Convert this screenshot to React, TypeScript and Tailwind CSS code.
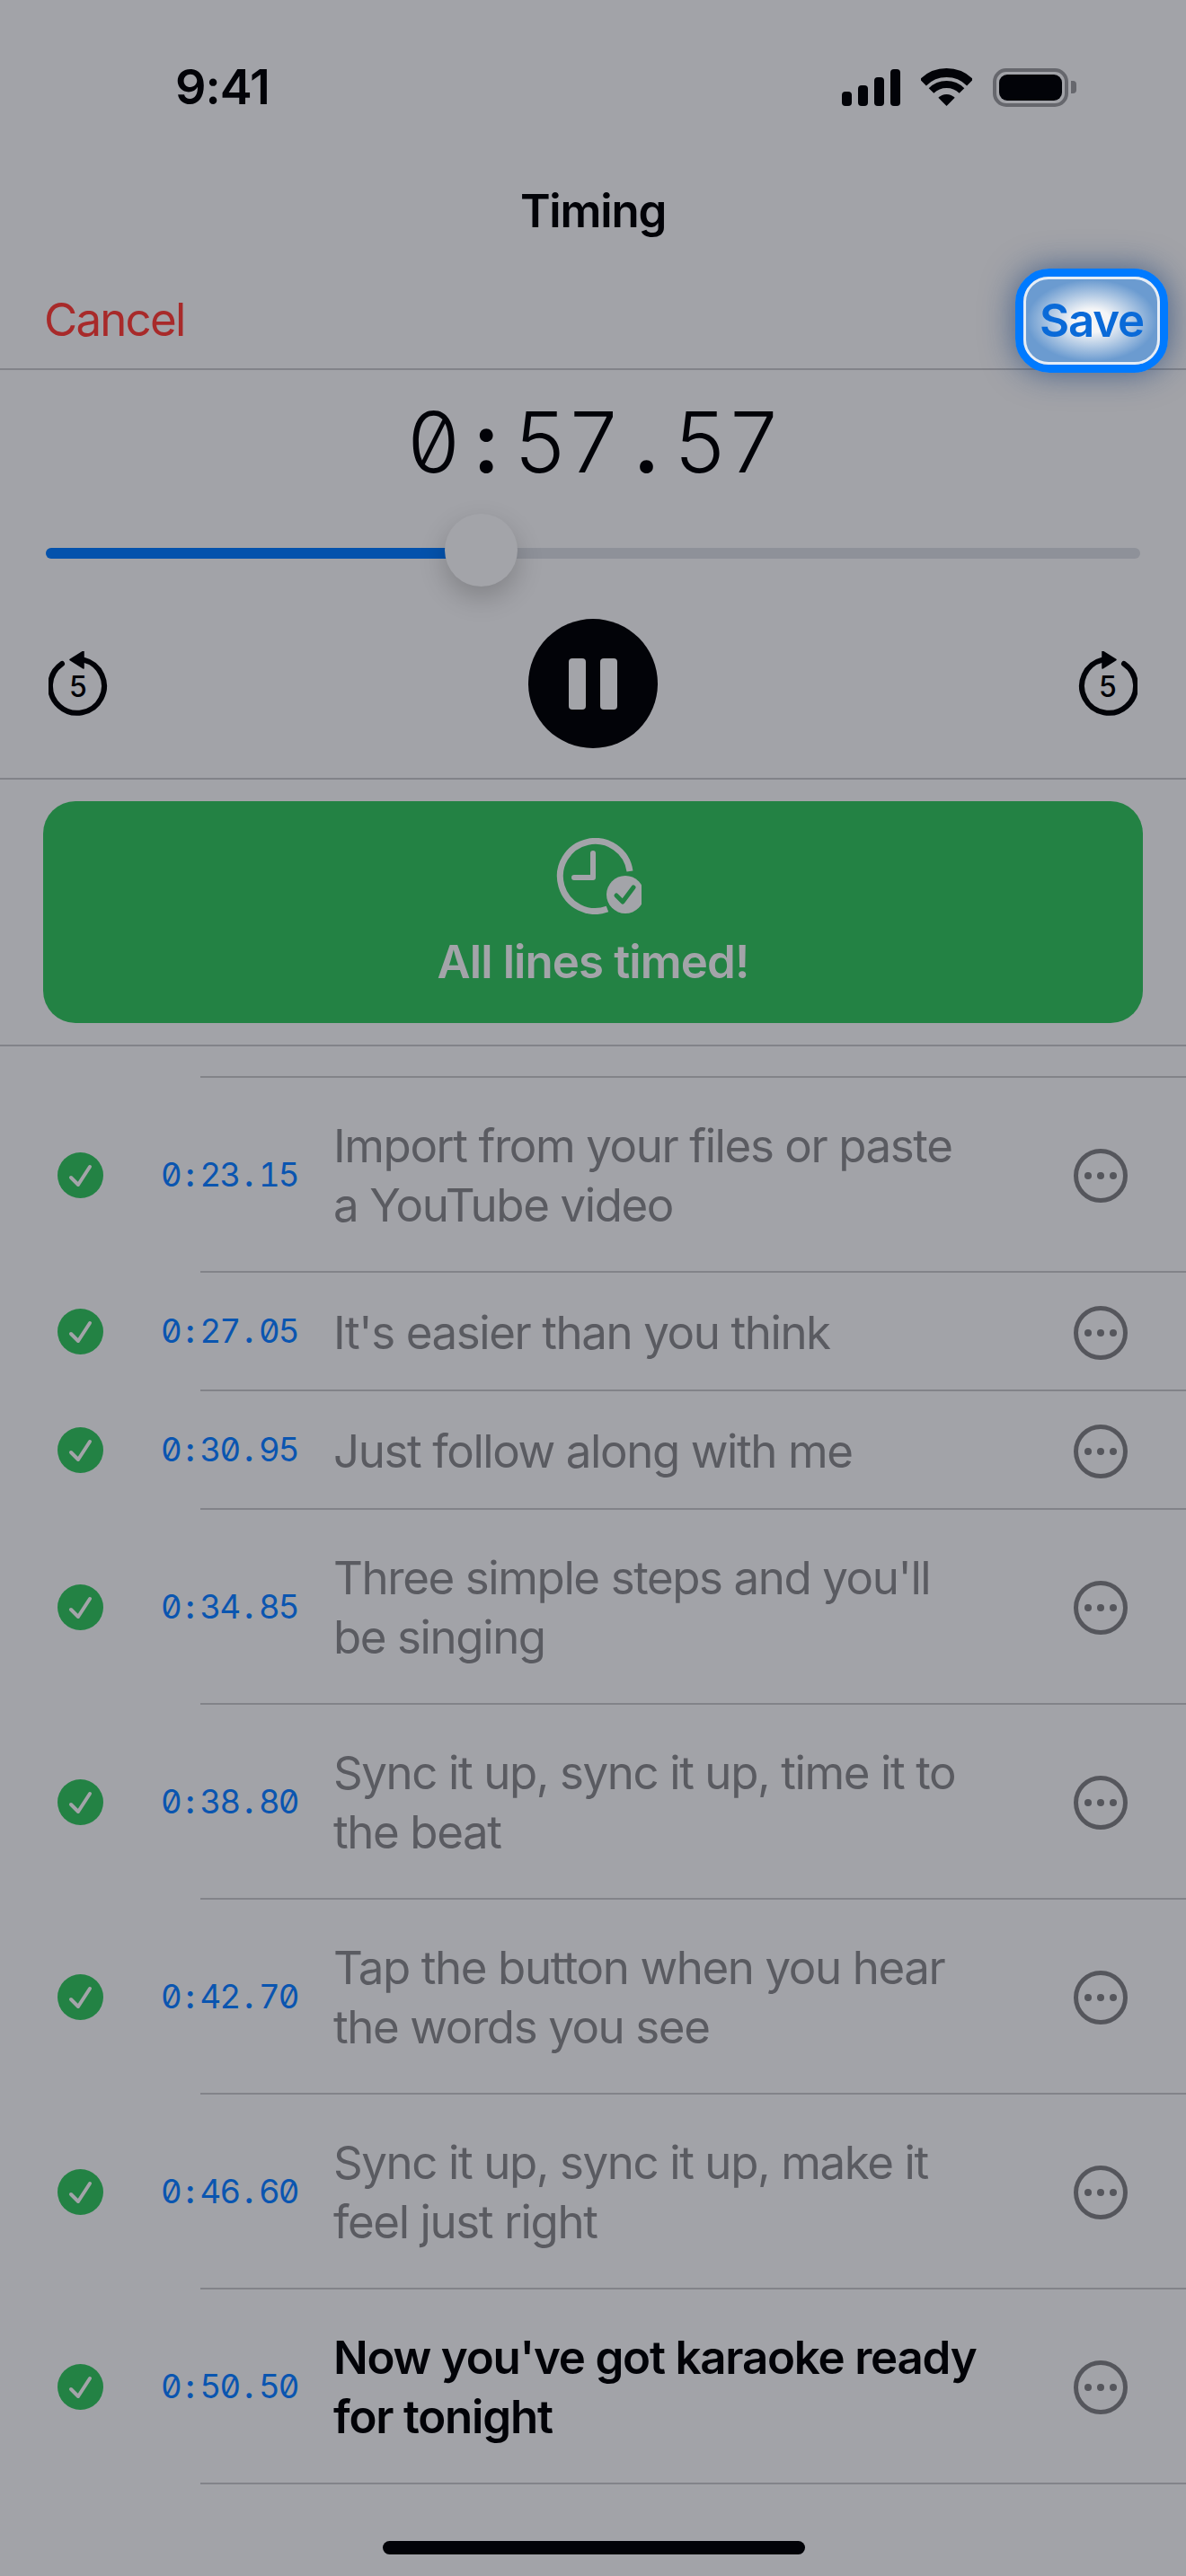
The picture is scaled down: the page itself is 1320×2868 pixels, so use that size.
const lines = [
  { time: '0:23.15', text: ['Import from your files or paste', 'a YouTube video'] },
  { time: '0:27.05', text: ["It's easier than you think"] },
  { time: '0:30.95', text: ['Just follow along with me'] },
  { time: '0:34.85', text: ["Three simple steps and you'll", 'be singing'] },
  { time: '0:38.80', text: ['Sync it up, sync it up, time it to', 'the beat'] },
  { time: '0:42.70', text: ['Tap the button when you hear', 'the words you see'] },
  { time: '0:46.60', text: ['Sync it up, sync it up, make it', 'feel just right'] },
  { time: '0:50.50', text: ["Now you've got karaoke ready", 'for tonight'], active: true },
]

// fixed cell per character, Inter has no mono cut
function MonoTime({ value, cell, punct }: { value: string; cell: string; punct: string }) {
  return (
    <span className="flex slashed-zero tabular-nums">
      {value.split('').map((ch, i) => (
        <span key={i} className={`${cell} text-center ${ch === ':' || ch === '.' ? punct : ''}`}>
          {ch}
        </span>
      ))}
    </span>
  )
}

function StatusIcons() {
  return (
    <div className="flex items-center">
      <svg width="65" height="41" viewBox="0 0 65 41" fill="#020308">
        <rect x="0" y="25" width="11" height="16" rx="4" />
        <rect x="18" y="18" width="11" height="23" rx="4" />
        <rect x="36" y="9" width="11" height="32" rx="4" />
        <rect x="54" y="0" width="11" height="41" rx="4" />
      </svg>
      <svg className="ml-[23px]" width="57" height="42" viewBox="0 0 57 42" fill="none" stroke="#020308">
        <path d="M2.34 15.84A37 37 0 0 1 54.66 15.84" strokeWidth="10" />
        <path d="M11.53 25.03A24 24 0 0 1 45.47 25.03" strokeWidth="8" />
        <path d="M28.5 42L19.3 32.8A13 13 0 0 1 37.7 32.8Z" fill="#020308" stroke="none" />
      </svg>
      <div className="ml-[23px] flex items-center">
        <div className="w-[84px] h-[43px] rounded-[15px] border-[4px] border-[#66676d] p-[3px]">
          <div className="w-full h-full rounded-[9px] bg-[#020308]" />
        </div>
        <div className="ml-[3px] w-[6px] h-[14px] rounded-r-[4px] bg-[#66676d]" />
      </div>
    </div>
  )
}

function SkipIcon({ forward }: { forward?: boolean }) {
  return (
    <svg width="66" height="72" viewBox="0 0 66 72" fill="none">
      <g transform={forward ? 'translate(66 0) scale(-1 1)' : undefined}>
        <path d="M15 14A30 30 0 1 0 39 9.6" stroke="#020308" strokeWidth="6" strokeLinecap="round" />
        <path d="M24 9.5L39 0V19Z" fill="#020308" stroke="#020308" strokeWidth="1.5" strokeLinejoin="round" />
      </g>
      <text x="33" y="50.5" textAnchor="middle" fontSize="32" fontWeight="500" fill="#020308" fontFamily="Inter, sans-serif">
        5
      </text>
    </svg>
  )
}

function ClockCheck() {
  return (
    <svg width="96" height="85" viewBox="0 0 96 85" fill="none">
      <path d="M83 37A39 39 0 1 0 58 79" stroke="#a3a4a9" strokeWidth="7" />
      <path d="M42 17V44H21" stroke="#a3a4a9" strokeWidth="6" strokeLinecap="round" strokeLinejoin="round" />
      <circle cx="78" cy="63" r="21" fill="#a3a4a9" />
      <path d="M68 64L75 71L87 55" stroke="#238244" strokeWidth="5" strokeLinecap="round" strokeLinejoin="round" />
    </svg>
  )
}

function DoneIcon() {
  return (
    <svg className="shrink-0 mt-[1px]" width="51" height="51" viewBox="0 0 51 51" fill="none">
      <circle cx="25.5" cy="25.5" r="25.5" fill="#238244" />
      <path d="M15 28L23 36L36 16" stroke="#a3a4a9" strokeWidth="4" strokeLinecap="round" strokeLinejoin="round" />
    </svg>
  )
}

function MoreIcon() {
  return (
    <svg className="mt-[3px]" width="60" height="60" viewBox="0 0 60 60" fill="none">
      <circle cx="30" cy="30" r="27.5" stroke="#55565c" strokeWidth="5" />
      <circle cx="16" cy="30" r="4" fill="#55565c" />
      <circle cx="30" cy="30" r="4" fill="#55565c" />
      <circle cx="44" cy="30" r="4" fill="#55565c" />
    </svg>
  )
}

export default function App() {
  return (
    <div className="relative w-[1320px] h-[2868px] overflow-hidden bg-[#a2a3a8] text-[#020308] [font-family:Inter,sans-serif]">
      <div className="h-[194px] pl-[195px] pr-[122px] flex items-center justify-between">
        <span className="text-[54px] font-semibold leading-none tracking-[-1px]">9:41</span>
        <StatusIcons />
      </div>

      <div className="h-[82px] flex items-center justify-center text-[51px] font-semibold tracking-[-1.2px]">Timing</div>

      <div className="h-[136px] pt-[22px] pl-[49px] pr-[20px] flex items-center justify-between border-b-2 border-[#828389]">
        <span className="pt-[4px] text-[51px] text-[#a82a2a] tracking-[-1.8px]">Cancel</span>
        <div className="relative z-10 -mb-[6px] w-[170px] h-[116px] rounded-[38px] border-[9px] border-[#007aff] shadow-[0_0_36px_rgba(20,60,120,0.65)]">
          <div className="w-full h-full rounded-[28px] border-[3px] border-[#e6edf6] flex items-center justify-center bg-[radial-gradient(ellipse_at_center,#f4f5f7_20%,#6b9bd0_70%)] text-[51px] font-semibold text-[#0a6ad8] tracking-[-1.2px]">
            Save
          </div>
        </div>
      </div>

      <div className="h-[164px] pb-[4px] flex items-center justify-center text-[94px] font-light leading-none">
        <MonoTime value="0:57.57" cell="w-[59.4px]" punct="font-semibold" />
      </div>

      <div className="relative mt-[34px] mx-[51px] h-[12px] rounded-full bg-[#8e9199]">
        <div className="h-full w-[460px] rounded-l-full bg-[#0452ac]" />
        <div className="absolute left-[444px] top-[-38px] w-[81px] h-[81px] rounded-full bg-[#a3a4a9] shadow-[0_12px_30px_rgba(0,0,0,0.2)]" />
      </div>

      <div className="mt-[67px] pb-[33px] px-[54px] flex items-center justify-between border-b-2 border-[#828389]">
        <SkipIcon />
        <div className="w-[144px] h-[144px] rounded-full bg-[#020308] flex items-center justify-center gap-[16px]">
          <div className="w-[19px] h-[57px] rounded-[4px] bg-[#a3a4a9]" />
          <div className="w-[19px] h-[57px] rounded-[4px] bg-[#a3a4a9]" />
        </div>
        <SkipIcon forward />
      </div>

      <div className="pt-[24px] pb-[24px] px-[48px] border-b-2 border-[#828389]">
        <div className="h-[247px] rounded-[36px] bg-[#238244] flex flex-col items-center pt-[41px]">
          <div className="ml-[12px]">
            <ClockCheck />
          </div>
          <div className="mt-[23px] text-[51px] leading-[60px] font-semibold text-[#a3a4a9] tracking-[-0.9px]">All lines timed!</div>
        </div>
      </div>

      <div className="h-[33px]" />
      <div className="ml-[223px] h-[2px] bg-[#828389]" />

      {lines.map((line) => (
        <div key={line.time}>
          <div className={`flex items-center pl-[64px] pr-[65px] ${line.text.length > 1 ? 'h-[215px]' : 'h-[130px]'}`}>
            <DoneIcon />
            <div className="ml-[64px] w-[192px] shrink-0 pt-[1px] text-[36.5px] text-[#0a55b0]">
              <MonoTime value={line.time} cell="w-[21.8px]" punct="font-semibold" />
            </div>
            <div className={`flex-1 pt-[3px] text-[51px] leading-[66px] ${line.active ? 'font-semibold text-[#020308] tracking-[-1.2px]' : 'text-[#5a5b61] tracking-[-1.4px]'}`}>
              {line.text.map((t) => (
                <div key={t}>{t}</div>
              ))}
            </div>
            <MoreIcon />
          </div>
          <div className="ml-[223px] h-[2px] bg-[#828389]" />
        </div>
      ))}

      <div className="absolute left-[426px] bottom-[24px] w-[470px] h-[15px] rounded-full bg-[#020308]" />
    </div>
  )
}
